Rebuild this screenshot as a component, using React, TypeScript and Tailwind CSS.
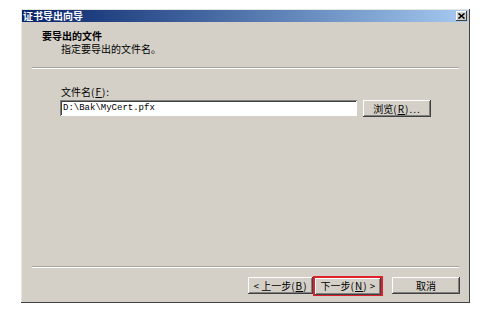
import React from "react";

const cjk = "font-['SimSun','Noto_Sans_CJK_SC',sans-serif]";

function WinButton({ children, className = "" }: { children: React.ReactNode; className?: string }) {
    return (
        <div
            className={`h-[17px] flex items-center justify-center bg-[#d4d0c8] text-[10px] leading-[12px] text-black shadow-[inset_-1px_-1px_#404040,inset_1px_1px_#ffffff,inset_-2px_-2px_#808080] ${className}`}
        >
            {children}
        </div>
    );
}

// accelerator key, e.g. (F)
function Key({ k }: { k: string }) {
    return (
        <span className="tracking-[1px]">
            (<span className="underline">{k}</span>)
        </span>
    );
}

function Separator() {
    return <div className="mx-[11px] h-[2px] border-t border-t-[#a8a59e] border-b border-b-white" />;
}

export default function App() {
    return (
        <div className={`w-[495px] h-[311px] bg-white pl-[21px] pt-[9px] ${cjk}`}>
            <div className="w-[449px] h-[294px] flex flex-col bg-[#d4d0c8] shadow-[inset_-1px_-1px_#404040,inset_1px_1px_#e8e6e1]">
                {/* title bar */}
                <div className="mt-[1px] ml-[1px] mr-[2px] h-[12px] flex items-center justify-between bg-gradient-to-r from-[#0a246a] to-[#a6caf0]">
                    <span className="pl-[1px] text-[10px] leading-[12px] font-bold text-white">证书导出向导</span>
                    <div className="mr-[1px] w-[11px] h-[10px] flex items-center justify-center bg-[#d4d0c8] shadow-[inset_-1px_-1px_#404040,inset_1px_1px_#ffffff]">
                        <svg width="7" height="6" viewBox="0 0 7 6">
                            <path d="M0.5 0.5 L6.5 5.5 M6.5 0.5 L0.5 5.5" stroke="#000" strokeWidth="1.6" />
                        </svg>
                    </div>
                </div>

                {/* header */}
                <div className="h-[45px] pt-[7px] pl-[21px] text-[10px] leading-[13px] text-black">
                    <div className="font-bold">要导出的文件</div>
                    <div className="pl-[19px]">指定要导出的文件名。</div>
                </div>
                <Separator />

                {/* body */}
                <div className="pl-[39px] pt-[17px] text-[10px] leading-[12px] text-black">
                    <div className="pl-[1px]">
                        文件名<Key k="F" />:
                    </div>
                    <div className="mt-[2px] flex items-start">
                        <div className="w-[297px] h-[16px] flex items-center pl-[3px] bg-white shadow-[inset_1px_1px_#808080,inset_-1px_-1px_#ffffff,inset_2px_2px_#404040]">
                            <span className="font-['Liberation_Mono',monospace] text-[9px] leading-[12px]">D:\Bak\MyCert.pfx</span>
                        </div>
                        <WinButton className="ml-[6px] w-[68px]">
                            浏览<Key k="R" />
                            <span className="tracking-[1px]">...</span>
                        </WinButton>
                    </div>
                </div>

                <div className="flex-1" />
                <Separator />

                {/* footer buttons */}
                <div className="h-[35px] flex items-center pl-[227px]">
                    <WinButton className="w-[65px]">
                        &lt;&nbsp;上一步<Key k="B" />
                    </WinButton>
                    <div className="w-[70px] h-[20px] border-2 border-[#e0202a] flex">
                        <WinButton className="w-[66px] h-[16px]">
                            下一步<Key k="N" />&nbsp;&gt;
                        </WinButton>
                    </div>
                    <WinButton className="ml-[9px] w-[68px]">取消</WinButton>
                </div>
            </div>
        </div>
    );
}
